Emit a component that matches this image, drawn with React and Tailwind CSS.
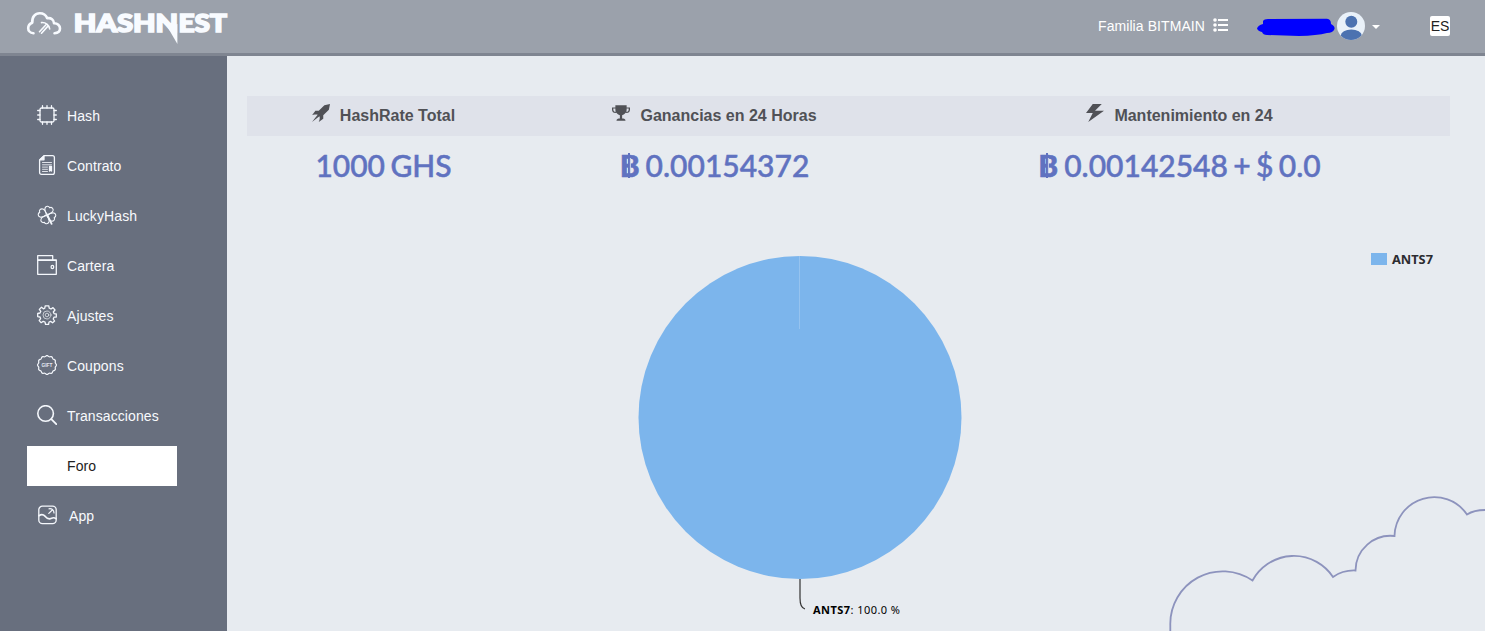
import { ImRocket, ImTrophy, ImPower } from 'react-icons/im';

const line = { fill: 'none', stroke: '#f4f7fc', strokeWidth: 1.3, strokeLinejoin: 'round', strokeLinecap: 'round' };

const scallop = (cx, cy, r, n, amp) => {
  const pts = [];
  for (let i = 0; i <= 120; i++) {
    const a = (i / 120) * Math.PI * 2;
    const rr = r + amp * Math.cos(a * n);
    pts.push(`${(cx + rr * Math.cos(a)).toFixed(2)},${(cy + rr * Math.sin(a)).toFixed(2)}`);
  }
  return `M${pts.join('L')}Z`;
};

const leaf = 'M10 9.4C7.6 8 5.9 6.2 5.8 4.1 5.8 1.7 8.4.5 10 2.3 11.6.5 14.2 1.7 14.2 4.1 14.1 6.2 12.4 8 10 9.4Z';

const icons = {
  hash: (
    <g {...line}>
      <rect x="3" y="3" width="14" height="14" rx="1.5" />
      <path d="M5.5 3V.7M10 3V.7M14.5 3V.7M5.5 19.3V17M10 19.3V17M14.5 19.3V17M3 5.5H.7M3 10H.7M3 14.5H.7M19.3 5.5H17M19.3 10H17M19.3 14.5H17" />
    </g>
  ),
  contract: (
    <g {...line}>
      <path d="M7 .7H15.5Q17.4.7 17.4 2.6V17.4Q17.4 19.3 15.5 19.3H4.5Q2.6 19.3 2.6 17.4V5Z" />
      <path d="M3 4.8 7 .9V4.8Z" fill="#f4f7fc" />
      <path d="M5.5 7.5H14.5M5.5 9.8H14.5M5.5 12.1H10.5M5.5 14.3H10.5M5.5 16.5H10.5" strokeWidth="1" opacity=".85" />
      <path d="M12.5 11.5H14.5V16L13.5 15.2 12.5 16Z" fill="#f4f7fc" />
    </g>
  ),
  lucky: (
    <g {...line} strokeWidth="1.1">
      <path d={leaf} transform="rotate(20 10 10)" />
      <path d={leaf} transform="rotate(110 10 10)" />
      <path d={leaf} transform="rotate(200 10 10)" />
      <path d={leaf} transform="rotate(290 10 10)" />
      <path d="M10.5 10.5 14.6 18.8" strokeWidth="1.8" />
    </g>
  ),
  wallet: (
    <g {...line}>
      <path d="M.7 4.8H19.3V19.3H.7ZM.7 4.8V.7H15.7V4.8" />
      <path d="M1 5.4H19" />
      <ellipse cx="15.4" cy="12" rx="1.3" ry="1.6" />
    </g>
  ),
  settings: (
    <g {...line}>
      <path d="M8.2.8H11.8L12.2 3.2 14 4 16 2.6 18 5 16.3 7 17 8.6 19.3 9V12L17 12.2 16.2 14 17.6 16 15.6 17.8 13.6 16.4 12 17 11.6 19.3H8.5L8 17 6.2 16.3 4.2 17.7 2.2 15.6 3.6 13.6 3 12 .7 11.6V8.5L3 8 3.8 6.3 2.3 4.4 4.5 2.3 6.4 3.8 7.8 3.2Z" />
      <circle cx="10" cy="10" r="4" strokeWidth=".9" opacity=".75" />
      <circle cx="10" cy="10" r="1.8" strokeWidth=".9" opacity=".75" />
    </g>
  ),
  coupon: (
    <g>
      <path d={scallop(10, 10, 9, 12, 0.45)} {...line} strokeWidth="1.2" />
      <text x="10" y="11.8" textAnchor="middle" fontSize="4.8" fontWeight="700" fill="#e4e8f0" className="font-['Liberation_Sans',sans-serif]">GIFT</text>
    </g>
  ),
  search: (
    <g {...line} strokeWidth="1.6">
      <circle cx="8.6" cy="8.5" r="7.8" />
      <path d="M14.3 14.2 19.3 19.2" strokeWidth="1.8" />
    </g>
  ),
  app: (
    <g {...line}>
      <rect x="1.8" y="1.2" width="17.4" height="17.4" rx="3.6" />
      <path d="M2 10.7C4.5 9 6.2 9.3 8 11.2 9.5 13 12 14.5 14.5 13.3 16 12.5 17.6 12.6 19 13.7" strokeWidth="1.7" />
      <path d="M12 3.8C14.5 3.3 17 5 17 8M15.3 5 11.8 8.4" strokeWidth="1.2" />
    </g>
  ),
};

const menu = [
  ['hash', 'Hash'],
  ['contract', 'Contrato'],
  ['lucky', 'LuckyHash'],
  ['wallet', 'Cartera'],
  ['settings', 'Ajustes'],
  ['coupon', 'Coupons'],
  ['search', 'Transacciones'],
  [null, 'Foro'],
  ['app', 'App'],
];

function Logo() {
  return (
    <svg width="206" height="38" viewBox="24 8 206 38" className="block overflow-visible">
      <g fill="none" stroke="#f8fbff" strokeLinecap="round" strokeLinejoin="round">
        <path d="M33.5 33.2C29.8 33 28.2 30.5 28.2 28.2 28.2 25.5 30 23.5 32.3 22.7 31.8 17 35 13.3 39.8 13.3 43.4 13.3 46 15.3 47.2 18.3 51 17.5 54 19.8 54 23.3 57.5 23.2 60 25.6 60 28.5 60 31 58 33 54.5 33.2" strokeWidth="2.6" />
        <path d="M41.5 22.6C45.5 22.2 49.3 25 49.7 29M46 24.7 39.5 31.7M47.7 26.4 41.5 33.2" strokeWidth="1.6" />
      </g>
      <g fontSize="25.5" stroke="#f8fbff" strokeWidth="1.7" fill="#f8fbff" className="font-['Lato',sans-serif] font-black">
        <text y="32">
          <tspan x="73.8" textLength="104.4" lengthAdjust="spacingAndGlyphs">HASHN</tspan>
          <tspan x="178.4" textLength="48.4" lengthAdjust="spacingAndGlyphs">EST</tspan>
        </text>
      </g>
      <path d="M167.5 27 177.4 24V44Z" fill="#f8fbff" />
    </svg>
  );
}

function Header() {
  return (
    <header className="flex h-14 shrink-0 items-start border-b-[3px] border-[#7f8591] bg-[#9ba1ab] pl-6 text-white">
      <div className="pt-2"><Logo /></div>
      <div className="ml-auto flex h-[53px] items-center pr-[35px]">
        <span className="-mt-0.5 text-sm tracking-[0.08px]">Familia BITMAIN</span>
        <svg width="16" height="14" viewBox="0 0 16 14" className="ml-2 -mt-[3px]" fill="#fff">
          <circle cx="2" cy="2" r="1.8" /><circle cx="2" cy="7" r="1.8" /><circle cx="2" cy="12" r="1.8" />
          <path d="M5 1H15V3H5ZM5 6H15V8H5ZM5 11H15V13H5Z" />
        </svg>
        <svg width="78" height="20" viewBox="0 0 78 20" className="ml-7 mt-[3px]">
          <path d="M6 3Q7 1 11 1L70 .8Q74 1 74 6 78 8 77.5 11 76 15 70 15 60 17.5 42 18L10 17Q6 17 5 14 1 13 0 10.5 1 7 6 6Z" fill="#0000fe" />
        </svg>
        <svg width="28" height="28" viewBox="0 0 28 28" className="ml-0.5 -mt-px">
          <defs><clipPath id="avatar"><circle cx="14" cy="14" r="14" /></clipPath></defs>
          <circle cx="14" cy="14" r="14" fill="#e9f1f9" />
          <g clipPath="url(#avatar)" fill="#4c72b0">
            <circle cx="14.3" cy="9.7" r="6" /><ellipse cx="14.3" cy="23.5" rx="10.5" ry="6" />
          </g>
        </svg>
        <svg width="8" height="4" viewBox="0 0 8 4" className="ml-[7px]"><path d="M0 0H8L4 4Z" fill="#fff" /></svg>
        <span className="ml-[50px] -mt-px flex h-5 w-5 items-center justify-center rounded-xs bg-white text-sm text-[#222]">ES</span>
      </div>
    </header>
  );
}

function Sidebar() {
  return (
    <nav className="w-[227px] shrink-0 bg-[#686f7e] pt-10 pl-[27px]">
      <ul className="flex flex-col gap-2.5">
        {menu.map(([icon, label]) => (
          <li
            key={label}
            className={`flex h-10 w-[150px] items-center pl-2.5 text-sm ${icon ? 'text-[#f8fafd]' : 'bg-white text-[#222]'}`}
          >
            <svg width="20" height="20" viewBox="0 0 20 20" className={`-mt-0.5 shrink-0 ${icon === 'app' ? 'mr-3' : 'mr-2.5'}`}>
              {icon && icons[icon]}
            </svg>
            <span className="tracking-[0.1px]">{label}</span>
          </li>
        ))}
      </ul>
    </nav>
  );
}

const stats = [
  { Icon: ImRocket, title: 'HashRate Total', value: '1000 GHS' },
  { Icon: ImTrophy, title: 'Ganancias en 24 Horas', coin: true, value: '0.00154372' },
  { Icon: ImPower, title: 'Mantenimiento en 24', coin: true, value: '0.00142548 + $ 0.0' },
];

function Bitcoin() {
  return (
    <span className="relative mr-1.5 inline-block font-black">
      B
      <svg width="4" height="25" viewBox="0 0 4 25" className="absolute top-[6px] left-[7px]">
        <path d="M2 0V25" stroke="#6072c0" strokeWidth="2" />
        <path d="M3.4 5V20" stroke="#c8d0e6" strokeWidth="1" />
      </svg>
    </span>
  );
}

function Stats() {
  return (
    <section className="w-[1203px]">
      <div className="grid h-10 grid-cols-[273px_389px_541px] bg-[#dfe2ea] text-[#505156]">
        {stats.map(({ Icon, title }) => (
          <div key={title} className="flex items-center justify-center">
            <Icon className="mr-2.5 -mt-1.5 size-[18px]" />
            <h2 className="text-base font-bold">{title}</h2>
          </div>
        ))}
      </div>
      <div className="grid grid-cols-[273px_389px_541px] pt-[11px] font-['Lato',sans-serif] text-[30px] leading-9 font-medium [word-spacing:-2.2px] text-[#6072c0] [-webkit-text-stroke:0.5px_#6072c0]">
        {stats.map(({ title, coin, value }) => (
          <p key={title} className="text-center whitespace-nowrap">
            {coin && <Bitcoin />}
            {value}
          </p>
        ))}
      </div>
    </section>
  );
}

function Chart() {
  return (
    <svg width="1203" height="431" viewBox="247 200 1203 431" className="block font-['Noto_Sans',sans-serif]">
      <circle cx="800" cy="417.5" r="161.5" fill="#7cb5ec" />
      <path d="M799.5 256V329" stroke="#96c3ef" strokeWidth="1" />
      <path d="M800 579V598Q800 608 805 609" fill="none" stroke="#333" strokeWidth="1.2" />
      <text x="813" y="614" fontSize="11" fill="#000" textLength="87"><tspan fontWeight="700">ANTS7</tspan>: 100.0 %</text>
      <rect x="1371" y="253" width="16" height="12" fill="#7cb5ec" />
      <text x="1392" y="264" fontSize="12.5" fontWeight="700" fill="#2c2c30" textLength="41" lengthAdjust="spacingAndGlyphs">ANTS7</text>
    </svg>
  );
}

function Cloud() {
  return (
    <svg width="335" height="151" viewBox="0 0 335 151" className="absolute right-0 bottom-0">
      <path
        d="M20.3 151V145A52.5 52.5 0 0 1 102.5 100.5A47 47 0 0 1 183 97Q193 90 205.5 90.5A35 35 0 0 1 244.5 56A39.7 39.7 0 0 1 317 34.5Q324 30 335 30"
        fill="none" stroke="#8d93bd" strokeWidth="1.8" strokeLinejoin="miter"
      />
    </svg>
  );
}

export default function App() {
  return (
    <div className="flex h-[631px] w-[1485px] flex-col overflow-hidden bg-[#e7ebf0] font-['Liberation_Sans',Arial,sans-serif]">
      <Header />
      <div className="flex min-h-0 flex-1">
        <Sidebar />
        <main className="relative flex flex-1 flex-col justify-between pt-10 pl-5">
          <Cloud />
          <Stats />
          <Chart />
        </main>
      </div>
    </div>
  );
}
